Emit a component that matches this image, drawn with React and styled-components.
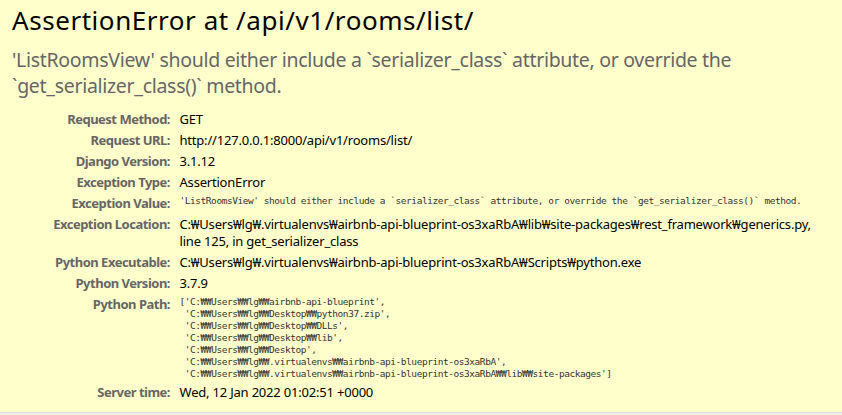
import React from 'react';
import styled, { createGlobalStyle } from 'styled-components';

const GlobalStyle = createGlobalStyle`
    html, body {
        margin: 0;
        padding: 0;
        background: #eee;
    }
    body {
        font-family: "Noto Sans", "Noto Sans CJK KR", sans-serif;
        font-size: 13px;
        color: #000;
    }
`

const Summary = styled.div`
    background: #ffc;
    padding: 3px 8px 9px 11px;
    border-bottom: 1px solid #ddd;
`

const Title = styled.h1`
    margin: 0 0 10px 1px;
    font-size: 26px;
    line-height: 34px;
    font-weight: normal;
    letter-spacing: 0.55px;
`

const Message = styled.h2`
    margin: 0 0 10px 1px;
    font-size: 19.5px;
    line-height: 26px;
    font-weight: normal;
    letter-spacing: -0.3px;
    color: #666;
`

const Table = styled.table`
    border: none;
    border-collapse: collapse;
    width: 100%;
    background: transparent;
`

const Th = styled.th`
    width: 156px;
    padding: 2px 6.5px 2px 3px;
    text-align: right;
    vertical-align: top;
    color: #666;
    font-weight: bold;
    letter-spacing: -0.5px;
    line-height: 17px;
    white-space: nowrap;
`

const Td = styled.td`
    padding: 2px 3px;
    vertical-align: top;
    line-height: 17px;
    letter-spacing: -0.2px;
`

const Pre = styled.pre`
    margin: 0;
    font-family: "DejaVu Sans Mono", "Liberation Mono", monospace;
    font-size: 9.5px;
    letter-spacing: -0.45px;
    line-height: 12px;
    color: #333;
    white-space: pre-wrap;
`

const pythonPath = [
    "['C:₩₩Users₩₩lg₩₩airbnb-api-blueprint',",
    " 'C:₩₩Users₩₩lg₩₩Desktop₩₩python37.zip',",
    " 'C:₩₩Users₩₩lg₩₩Desktop₩₩DLLs',",
    " 'C:₩₩Users₩₩lg₩₩Desktop₩₩lib',",
    " 'C:₩₩Users₩₩lg₩₩Desktop',",
    " 'C:₩₩Users₩₩lg₩₩.virtualenvs₩₩airbnb-api-blueprint-os3xaRbA',",
    " 'C:₩₩Users₩₩lg₩₩.virtualenvs₩₩airbnb-api-blueprint-os3xaRbA₩₩lib₩₩site-packages']",
].join('\n');

const rows = [
    ['Request Method:', 'GET'],
    ['Request URL:', 'http://127.0.0.1:8000/api/v1/rooms/list/'],
    ['Django Version:', '3.1.12'],
    ['Exception Type:', 'AssertionError'],
    ['Exception Value:', <Pre>'ListRoomsView' should either include a `serializer_class` attribute, or override the `get_serializer_class()` method.</Pre>],
    ['Exception Location:', 'C:₩Users₩lg₩.virtualenvs₩airbnb-api-blueprint-os3xaRbA₩lib₩site-packages₩rest_framework₩generics.py, line 125, in get_serializer_class'],
    ['Python Executable:', 'C:₩Users₩lg₩.virtualenvs₩airbnb-api-blueprint-os3xaRbA₩Scripts₩python.exe'],
    ['Python Version:', '3.7.9'],
    ['Python Path:', <Pre>{pythonPath}</Pre>],
    ['Server time:', 'Wed, 12 Jan 2022 01:02:51 +0000'],
];

export default function App() {
    return (
        <>
            <GlobalStyle />
            <Summary>
                <Title>AssertionError at /api/v1/rooms/list/</Title>
                <Message>'ListRoomsView' should either include a `serializer_class` attribute, or override the `get_serializer_class()` method.</Message>
                <Table>
                    <tbody>
                        {rows.map(([label, value]) => (
                            <tr key={label}>
                                <Th>{label}</Th>
                                <Td>{value}</Td>
                            </tr>
                        ))}
                    </tbody>
                </Table>
            </Summary>
        </>
    );
}
